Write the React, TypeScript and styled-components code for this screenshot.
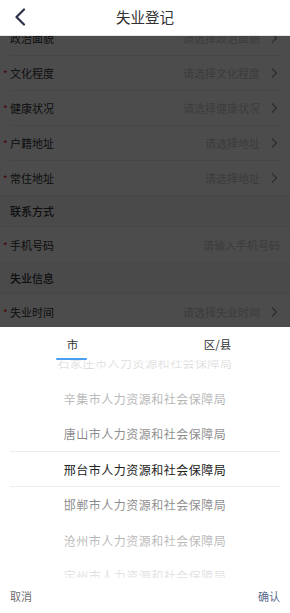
import styled, { createGlobalStyle } from 'styled-components';

const GlobalStyle = createGlobalStyle`
  html, body {
    margin: 0;
    padding: 0;
    background: #fff;
  }
  body {
    font-family: "Noto Sans CJK SC", "Noto Sans", sans-serif;
    color: #323233;
  }
  * { box-sizing: border-box; }
`;

type Field = { label: string; placeholder: string; required?: boolean; arrow?: boolean };
type Block = { title?: string; fields: Field[] };

const blocks: Block[] = [
  {
    fields: [
      { label: '政治面貌', placeholder: '请选择政治面貌', arrow: true },
      { label: '文化程度', placeholder: '请选择文化程度', required: true, arrow: true },
      { label: '健康状况', placeholder: '请选择健康状况', required: true, arrow: true },
      { label: '户籍地址', placeholder: '请选择地址', required: true, arrow: true },
      { label: '常住地址', placeholder: '请选择地址', required: true, arrow: true },
    ],
  },
  {
    title: '联系方式',
    fields: [{ label: '手机号码', placeholder: '请输入手机号码', required: true }],
  },
  {
    title: '失业信息',
    fields: [
      { label: '失业时间', placeholder: '请选择失业时间', required: true, arrow: true },
      { label: '失业原因', placeholder: '请选择失业原因', required: true, arrow: true },
      { label: '就业意向', placeholder: '请选择就业意向', arrow: true },
    ],
  },
];

const bureaus = [
  '石家庄市人力资源和社会保障局',
  '辛集市人力资源和社会保障局',
  '唐山市人力资源和社会保障局',
  '邢台市人力资源和社会保障局',
  '邯郸市人力资源和社会保障局',
  '沧州市人力资源和社会保障局',
  '定州市人力资源和社会保障局',
];

const ITEM = 35.5;
const VIEW = 218;
const selected = 3;

export default function App() {
  return (
    <Page>
      <GlobalStyle />
      <NavBar>
        <BackButton>
          <svg width="12" height="18" viewBox="0 0 12 18">
            <polyline points="10,1.5 2.5,9 10,16.5" fill="none" stroke="#2b3148" strokeWidth="2.2" strokeLinecap="round" strokeLinejoin="round" />
          </svg>
        </BackButton>
        <NavTitle>失业登记</NavTitle>
      </NavBar>

      <Main>
        <FormScroll>
          {blocks.map((b, i) => (
            <section key={i}>
              {b.title && <GroupTitle>{b.title}</GroupTitle>}
              {b.fields.map((f) => (
                <Row key={f.label}>
                  {f.required && <Star>*</Star>}
                  <Label>{f.label}</Label>
                  <Value>{f.placeholder}</Value>
                  {f.arrow ? (
                    <Arrow width="12" height="12" viewBox="0 0 12 12">
                      <polyline points="4,1.5 8.5,6 4,10.5" fill="none" stroke="#969799" strokeWidth="1.3" />
                    </Arrow>
                  ) : null}
                </Row>
              ))}
            </section>
          ))}
        </FormScroll>

        <Overlay />

        <Sheet>
          <Tabs>
            <Tab $active>市</Tab>
            <Tab>区/县</Tab>
          </Tabs>
          <Picker>
            <Column style={{ transform: `translateY(${VIEW / 2 - ITEM / 2 - selected * ITEM}px)` }}>
              {bureaus.map((name, i) => (
                <Option key={name} $active={i === selected}>{name}</Option>
              ))}
            </Column>
            <MaskTop />
            <MaskBottom />
            <Frame />
          </Picker>
          <Toolbar>
            <ToolButton>取消</ToolButton>
            <ToolButton $confirm>确认</ToolButton>
          </Toolbar>
        </Sheet>
      </Main>
    </Page>
  );
}

const Page = styled.div`
  width: 290px;
  height: 613px;
  display: flex;
  flex-direction: column;
  overflow: hidden;
  background: #fff;
`;

const NavBar = styled.header`
  position: relative;
  z-index: 3;
  height: 36px;
  flex-shrink: 0;
  display: flex;
  align-items: center;
  justify-content: center;
  background: #fff;
  border-bottom: 1px solid #e6e6e6;
`;

const BackButton = styled.span`
  position: absolute;
  left: 14px;
  top: 8px;
  display: flex;
`;

const NavTitle = styled.h1`
  margin: 0;
  font-size: 14.5px;
  font-weight: 400;
  color: #323233;
  line-height: 1;
`;

const Main = styled.main`
  position: relative;
  flex: 1;
  overflow: hidden;
`;

const FormScroll = styled.div`
  margin-top: -16px;
`;

const GroupTitle = styled.div`
  height: 32px;
  display: flex;
  align-items: center;
  padding: 0 10px;
  font-size: 11px;
  font-weight: 500;
  color: #323233;
  background: #f7f8fa;
  border-top: 1px solid #ebedf0;
  border-bottom: 1px solid #ebedf0;
`;

const Row = styled.div`
  position: relative;
  height: 35px;
  display: flex;
  align-items: center;
  padding: 0 10px;
  font-size: 11px;
  background: #fff;

  & + &::before {
    content: '';
    position: absolute;
    left: 10px;
    right: 10px;
    top: 0;
    border-top: 1px solid #ebedf0;
  }
`;

const Star = styled.span`
  position: absolute;
  left: 3px;
  top: 50%;
  transform: translateY(-45%);
  color: #ee0a24;
  font-size: 10px;
`;

const Label = styled.span`
  color: #323233;
`;

const Value = styled.span`
  margin-left: auto;
  color: #c8c9cc;
`;

const Arrow = styled.svg`
  margin-left: 8px;
  flex-shrink: 0;
`;

const Overlay = styled.div`
  position: absolute;
  inset: 0;
  z-index: 1;
  background: rgba(0, 0, 0, 0.7);
`;

const Sheet = styled.div`
  position: absolute;
  left: 0;
  right: 0;
  bottom: 0;
  z-index: 2;
  height: 286px;
  display: flex;
  flex-direction: column;
  background: #fff;
`;

const Tabs = styled.div`
  height: 33px;
  display: flex;
  flex-shrink: 0;
`;

const Tab = styled.div<{ $active?: boolean }>`
  position: relative;
  flex: 1;
  display: flex;
  align-items: center;
  justify-content: center;
  font-size: 11.5px;
  color: #323233;

  &::after {
    content: '';
    display: ${(p) => (p.$active ? 'block' : 'none')};
    position: absolute;
    bottom: 0;
    left: 50%;
    width: 31px;
    margin-left: -16.5px;
    height: 2.5px;
    border-radius: 2px;
    background: #4a9ff0;
  }
`;

const Picker = styled.div`
  position: relative;
  height: ${VIEW}px;
  flex-shrink: 0;
  overflow: hidden;
`;

const Column = styled.div`
  display: flex;
  flex-direction: column;
`;

const Option = styled.div<{ $active?: boolean }>`
  height: ${ITEM}px;
  flex-shrink: 0;
  display: flex;
  align-items: center;
  justify-content: center;
  font-size: 12px;
  letter-spacing: 0.5px;
  color: ${(p) => (p.$active ? '#222' : '#323233')};
`;

const MaskTop = styled.div`
  position: absolute;
  left: 0;
  right: 0;
  top: 0;
  height: ${(VIEW - ITEM) / 2}px;
  background: linear-gradient(180deg, rgba(255, 255, 255, 0.88), rgba(255, 255, 255, 0.34));
  pointer-events: none;
`;

const MaskBottom = styled(MaskTop)`
  top: auto;
  bottom: 0;
  background: linear-gradient(0deg, rgba(255, 255, 255, 0.88), rgba(255, 255, 255, 0.34));
`;

const Frame = styled.div`
  position: absolute;
  left: 10px;
  right: 10px;
  top: 50%;
  height: ${ITEM}px;
  margin-top: ${-ITEM / 2}px;
  border-top: 1px solid #ebedf0;
  border-bottom: 1px solid #ebedf0;
  pointer-events: none;
`;

const Toolbar = styled.div`
  flex: 1;
  display: flex;
  align-items: center;
  justify-content: space-between;
  padding: 0 10px;
`;

const ToolButton = styled.span<{ $confirm?: boolean }>`
  font-size: 11px;
  color: ${(p) => (p.$confirm ? '#5b6b8c' : '#6e6e6e')};
`;
